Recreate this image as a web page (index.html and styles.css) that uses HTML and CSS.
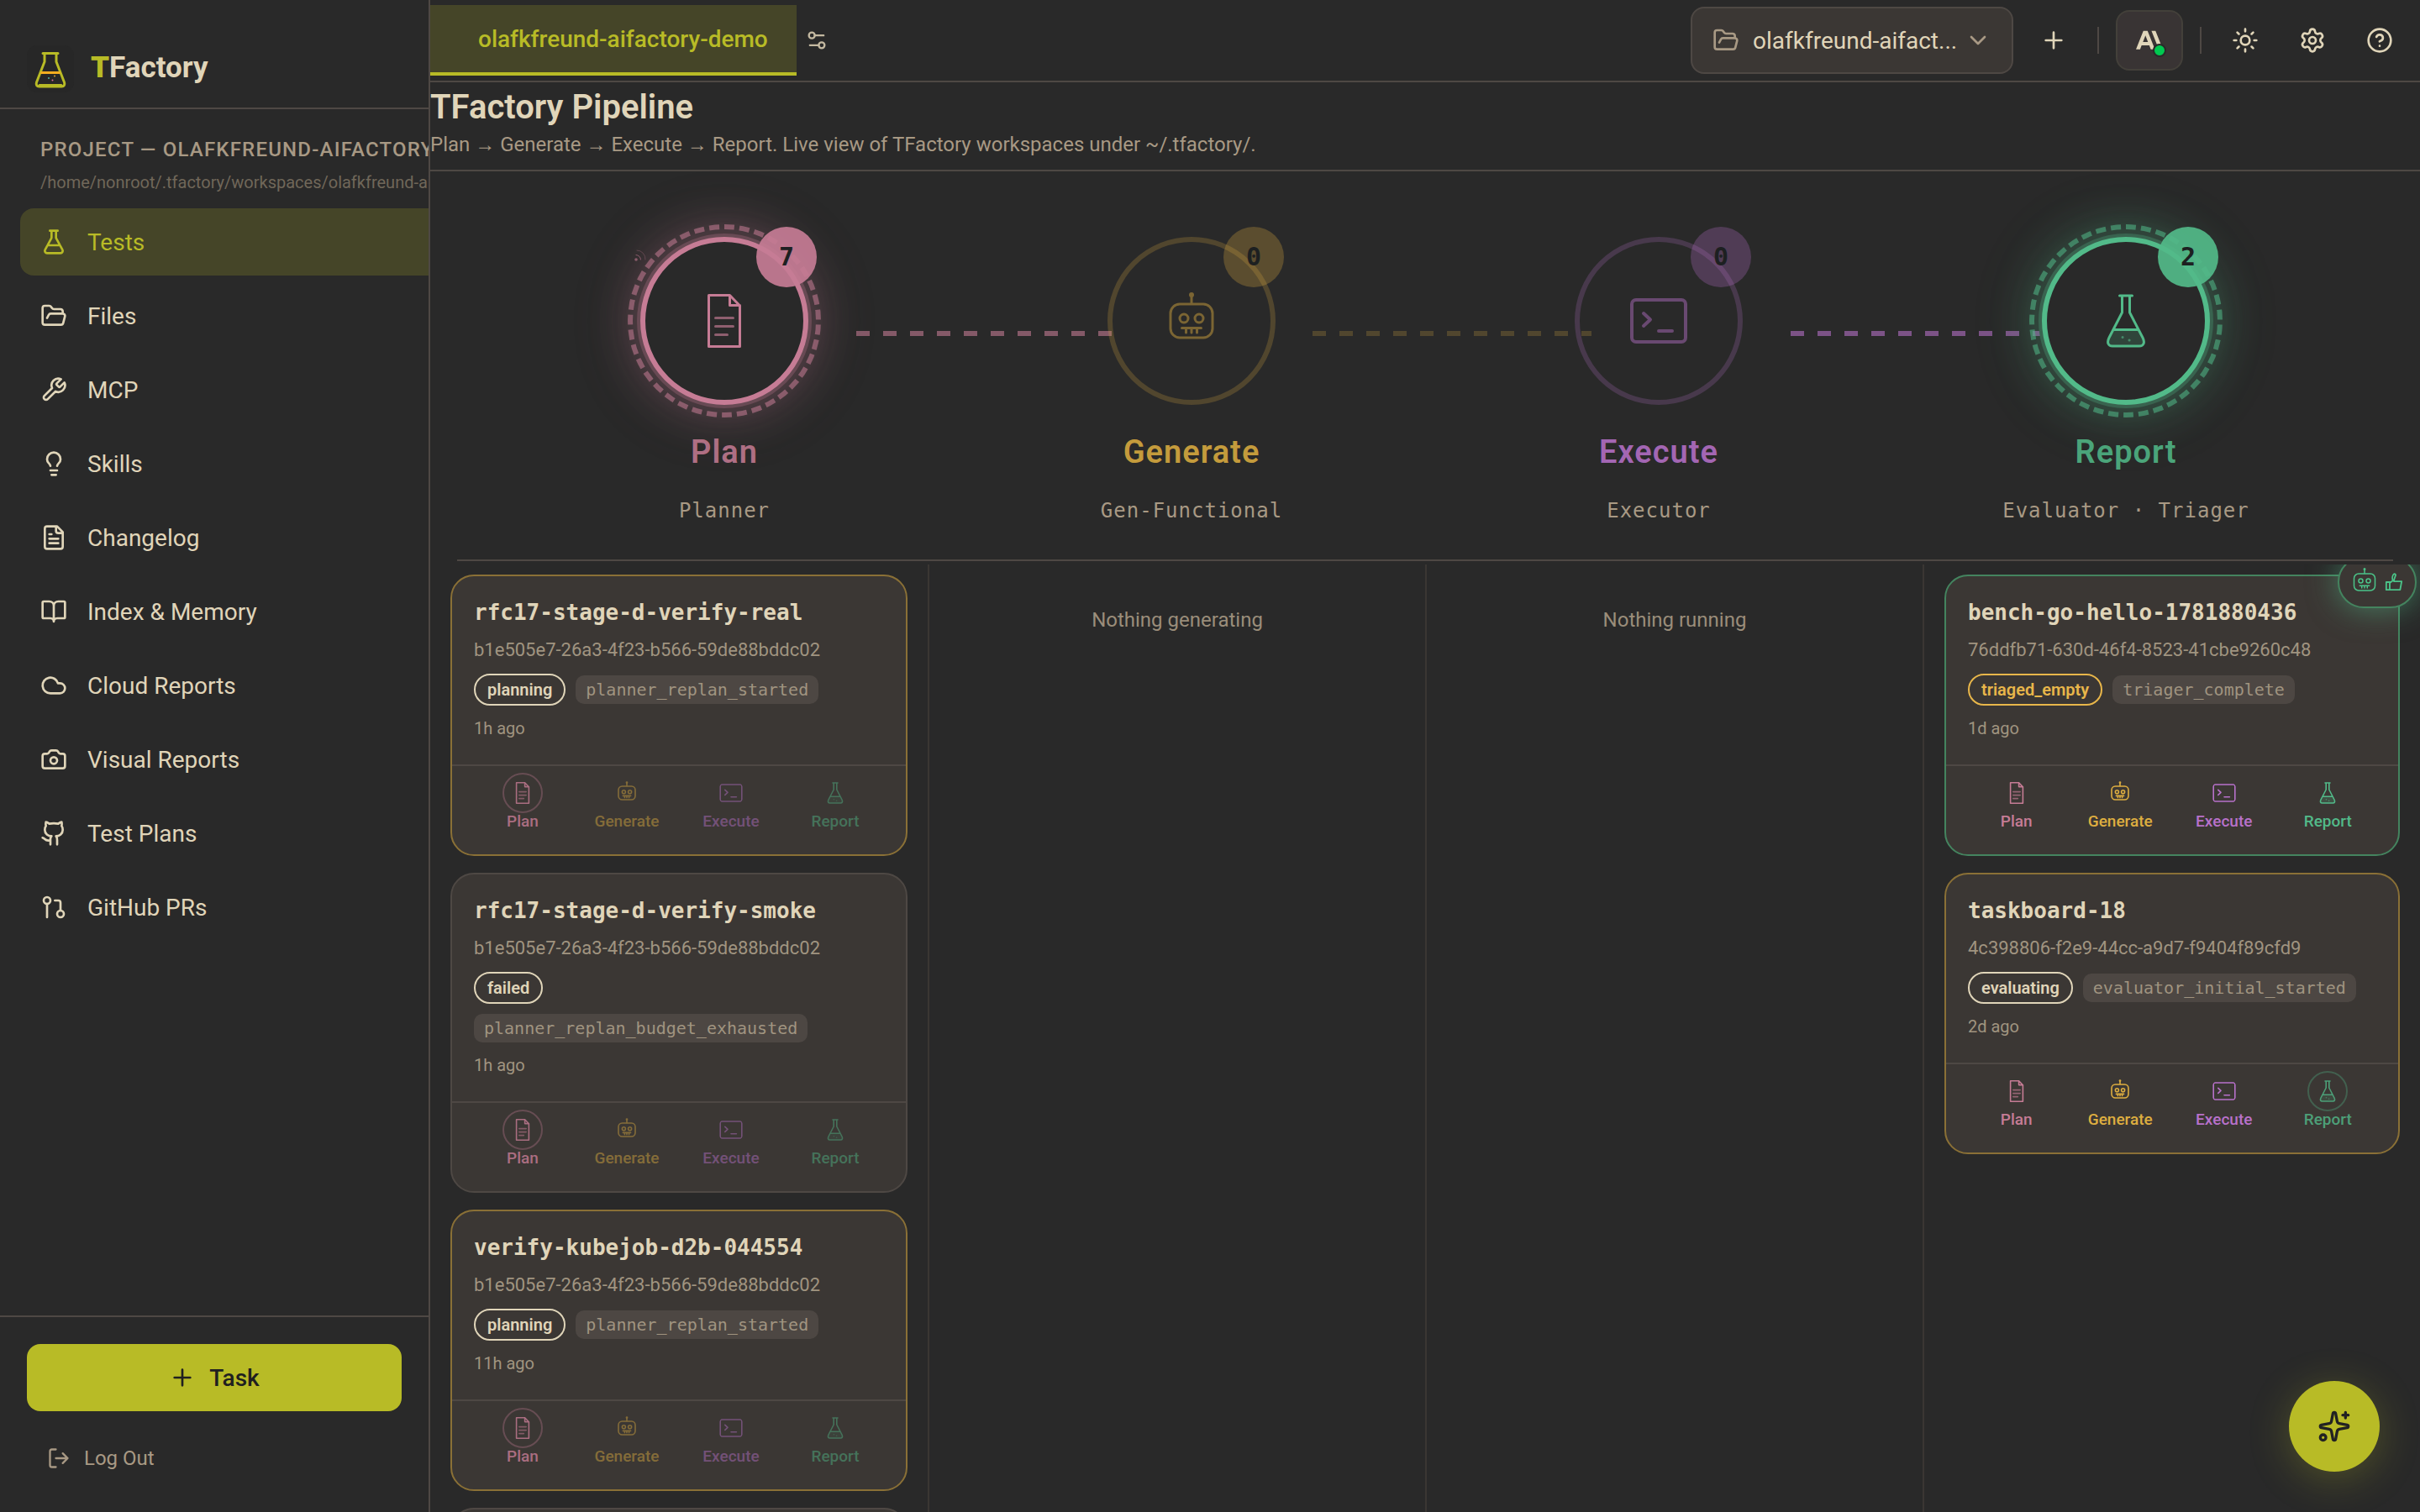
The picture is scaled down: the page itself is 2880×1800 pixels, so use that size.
FILE: index.html
```html
<!DOCTYPE html>
<html lang="en">
<head>
<meta charset="utf-8">
<meta name="viewport" content="width=device-width, initial-scale=1">
<title>TFactory Pipeline</title>
<link rel="stylesheet" href="styles.css">
</head>
<body>
<svg class="sprite" aria-hidden="true">
  <symbol id="flask" viewBox="0 0 24 24"><path d="M14 2v6a2 2 0 0 0 .245.96l5.51 10.08A2 2 0 0 1 18 22H6a2 2 0 0 1-1.755-2.96l5.51-10.08A2 2 0 0 0 10 8V2M6.453 15h11.094M8.5 2h7"/></symbol>
  <symbol id="folder" viewBox="0 0 24 24"><path d="m6 14 1.5-2.9A2 2 0 0 1 9.24 10H20a2 2 0 0 1 1.94 2.5l-1.54 6a2 2 0 0 1-1.95 1.5H4a2 2 0 0 1-2-2V5a2 2 0 0 1 2-2h3.9a2 2 0 0 1 1.69.9l.81 1.2a2 2 0 0 0 1.67.9H18a2 2 0 0 1 2 2v2"/></symbol>
  <symbol id="wrench" viewBox="0 0 24 24"><path d="M14.7 6.3a1 1 0 0 0 0 1.4l1.6 1.6a1 1 0 0 0 1.4 0l3.77-3.77a6 6 0 0 1-7.94 7.94l-6.91 6.91a2.12 2.12 0 0 1-3-3l6.91-6.91a6 6 0 0 1 7.94-7.94l-3.76 3.76z"/></symbol>
  <symbol id="bulb" viewBox="0 0 24 24"><path d="M15 14c.2-1 .7-1.7 1.5-2.5 1-.9 1.5-2.2 1.5-3.5A6 6 0 0 0 6 8c0 1 .2 2.2 1.5 3.5.7.7 1.3 1.5 1.5 2.5M9 18h6M10 22h4"/></symbol>
  <symbol id="file" viewBox="0 0 24 24"><path d="M15 2H6a2 2 0 0 0-2 2v16a2 2 0 0 0 2 2h12a2 2 0 0 0 2-2V7ZM14 2v4a2 2 0 0 0 2 2h4M10 9H8M16 13H8M16 17H8"/></symbol>
  <symbol id="book" viewBox="0 0 24 24"><path d="M12 7v14M3 18a1 1 0 0 1-1-1V4a1 1 0 0 1 1-1h5a4 4 0 0 1 4 4 4 4 0 0 1 4-4h5a1 1 0 0 1 1 1v13a1 1 0 0 1-1 1h-6a3 3 0 0 0-3 3 3 3 0 0 0-3-3z"/></symbol>
  <symbol id="cloud" viewBox="0 0 24 24"><path d="M17.5 19H9a7 7 0 1 1 6.71-9h1.79a4.5 4.5 0 1 1 0 9Z"/></symbol>
  <symbol id="camera" viewBox="0 0 24 24"><path d="M13.997 4a2 2 0 0 1 1.76 1.05l.486.9A2 2 0 0 0 18.003 7H20a2 2 0 0 1 2 2v9a2 2 0 0 1-2 2H4a2 2 0 0 1-2-2V9a2 2 0 0 1 2-2h1.997a2 2 0 0 0 1.759-1.048l.489-.904A2 2 0 0 1 10.004 4z"/><circle cx="12" cy="13" r="3"/></symbol>
  <symbol id="github" viewBox="0 0 24 24"><path d="M15 22v-4a4.8 4.8 0 0 0-1-3.5c3 0 6-2 6-5.5.08-1.25-.27-2.48-1-3.5.28-1.15.28-2.35 0-3.5 0 0-1 0-3 1.5-2.64-.5-5.36-.5-8 0C6 2 5 2 5 2c-.3 1.15-.3 2.35 0 3.5A5.403 5.403 0 0 0 4 9c0 3.5 3 5.5 6 5.5-.39.49-.68 1.05-.85 1.65-.17.6-.22 1.23-.15 1.85v4M9 18c-4.51 2-5-2-7-2"/></symbol>
  <symbol id="pull" viewBox="0 0 24 24"><circle cx="18" cy="18" r="3"/><circle cx="6" cy="6" r="3"/><path d="M13 6h3a2 2 0 0 1 2 2v7M6 9v12"/></symbol>
  <symbol id="plus" viewBox="0 0 24 24"><path d="M5 12h14M12 5v14"/></symbol>
  <symbol id="logout" viewBox="0 0 24 24"><path d="M9 21H5a2 2 0 0 1-2-2V5a2 2 0 0 1 2-2h4M16 17l5-5-5-5M21 12H9"/></symbol>
  <symbol id="tune" viewBox="0 0 24 24"><path d="M14 17H5M19 7h-9"/><circle cx="17" cy="17" r="3"/><circle cx="7" cy="7" r="3"/></symbol>
  <symbol id="chevron" viewBox="0 0 24 24"><path d="m6 9 6 6 6-6"/></symbol>
  <symbol id="sun" viewBox="0 0 24 24"><circle cx="12" cy="12" r="4"/><path d="M12 2v2M12 20v2M4.93 4.93l1.41 1.41M17.66 17.66l1.41 1.41M2 12h2M20 12h2M6.34 17.66l-1.41 1.41M19.07 4.93l-1.41 1.41"/></symbol>
  <symbol id="gear" viewBox="0 0 24 24"><path d="M9.671 4.136a2.34 2.34 0 0 1 4.659 0 2.34 2.34 0 0 0 3.319 1.915 2.34 2.34 0 0 1 2.33 4.033 2.34 2.34 0 0 0 0 3.831 2.34 2.34 0 0 1-2.33 4.033 2.34 2.34 0 0 0-3.319 1.915 2.34 2.34 0 0 1-4.659 0 2.34 2.34 0 0 0-3.32-1.915 2.34 2.34 0 0 1-2.33-4.033 2.34 2.34 0 0 0 0-3.831A2.34 2.34 0 0 1 6.35 6.051a2.34 2.34 0 0 0 3.319-1.915"/><circle cx="12" cy="12" r="3"/></symbol>
  <symbol id="help" viewBox="0 0 24 24"><circle cx="12" cy="12" r="10"/><path d="M9.09 9a3 3 0 0 1 5.83 1c0 2-3 3-3 3M12 17h.01"/></symbol>
  <symbol id="sparkles" viewBox="0 0 24 24"><path d="M11.017 2.814a1 1 0 0 1 1.966 0l1.051 5.558a2 2 0 0 0 1.594 1.594l5.558 1.051a1 1 0 0 1 0 1.966l-5.558 1.051a2 2 0 0 0-1.594 1.594l-1.051 5.558a1 1 0 0 1-1.966 0l-1.051-5.558a2 2 0 0 0-1.594-1.594l-5.558-1.051a1 1 0 0 1 0-1.966l5.558-1.051a2 2 0 0 0 1.594-1.594zM20 2v4M22 4h-4"/><circle cx="4" cy="20" r="2"/></symbol>
  <symbol id="thumb" viewBox="0 0 24 24"><path d="M2 12h4.500v10H2zM6.500 13l4-3c-1-3-.5-7 1.500-8.500 1.500-.5 2.500.5 2 2-.5 2-2 4-2 7.500H22l-2 11H6.500"/></symbol>
  <symbol id="s-plan" viewBox="0 0 80 80"><path d="M21.500 9.500H46.500L58.500 22V70.500H21.500ZM46.500 10V21.500H58.500"/><path opacity=".65" d="M29.500 36.500h21M29.500 46.500h21M29.500 56.500h14"/></symbol>
  <symbol id="s-generate" viewBox="0 0 80 80"><rect x="15" y="20" width="50" height="40" rx="11"/><path d="M40 19V10"/><circle cx="40" cy="9" r="1.500"/><circle cx="31" cy="37" r="5"/><circle cx="49" cy="37" r="5"/><path d="M28.500 48.500h23M33.500 49v5M40 49v5M46.500 49v5"/></symbol>
  <symbol id="s-execute" viewBox="0 0 80 80"><rect x="8" y="15" width="64" height="50" rx="5"/><path d="m22 31 8 7.500-8 7.500M40 52h16"/></symbol>
  <symbol id="s-report" viewBox="0 0 80 80"><path class="liquid" d="M26 50H54L60 62c2 5 0 8-4 8H24c-4 0-6-3-4-8z"/><path d="M32.500 10h15M35.500 10v20L20 60c-3 6-1 10 4 10h32c5 0 7-4 4-10L44.500 30V10M26 50.500h28"/><path opacity=".6" d="M36 59.500h.1M44 63h.1"/></symbol>
</svg>

<aside class="sidebar">
  <header class="brand">
    <svg class="brand-mark" viewBox="0 0 56 56" aria-hidden="true"><path d="M19 9.500h18M21 10v9.500L11.500 44c-1 3 .5 5 3 5h27c2.500 0 4-2 3-5L35 19.500V10"/><path d="M15 47.500h26" /><path class="brand-level" d="M17.500 32.500h21"/><circle class="dot-a" cx="26" cy="39" r="1"/><circle class="dot-b" cx="30.500" cy="41.500" r="1"/><circle class="dot-c" cx="33" cy="36.500" r="1"/></svg>
    <span class="brand-name"><b>T</b>Factory</span>
  </header>
  <div class="project">
    <h2 class="project-title">PROJECT — OLAFKFREUND-AIFACTORY-DEMO</h2>
    <p class="project-path">/home/nonroot/.tfactory/workspaces/olafkfreund-aifactory-demo</p>
  </div>
  <nav class="nav">
    <a class="nav-item active" href="#"><svg class="icon"><use href="#flask"/></svg>Tests</a>
    <a class="nav-item" href="#"><svg class="icon"><use href="#folder"/></svg>Files</a>
    <a class="nav-item" href="#"><svg class="icon"><use href="#wrench"/></svg>MCP</a>
    <a class="nav-item" href="#"><svg class="icon"><use href="#bulb"/></svg>Skills</a>
    <a class="nav-item" href="#"><svg class="icon"><use href="#file"/></svg>Changelog</a>
    <a class="nav-item" href="#"><svg class="icon"><use href="#book"/></svg>Index &amp; Memory</a>
    <a class="nav-item" href="#"><svg class="icon"><use href="#cloud"/></svg>Cloud Reports</a>
    <a class="nav-item" href="#"><svg class="icon"><use href="#camera"/></svg>Visual Reports</a>
    <a class="nav-item" href="#"><svg class="icon"><use href="#github"/></svg>Test Plans</a>
    <a class="nav-item" href="#"><svg class="icon"><use href="#pull"/></svg>GitHub PRs</a>
  </nav>
  <footer class="side-foot">
    <button class="task-btn" type="button"><svg class="icon"><use href="#plus"/></svg>Task</button>
    <button class="logout-btn" type="button"><svg class="icon small"><use href="#logout"/></svg>Log Out</button>
  </footer>
</aside>

<div class="main">
  <header class="topbar">
    <button class="tab" type="button">olafkfreund-aifactory-demo</button>
    <button class="tab-tune" type="button" aria-label="Tab settings"><svg class="icon small"><use href="#tune"/></svg></button>
    <div class="tools">
      <label class="picker">
        <svg class="icon"><use href="#folder"/></svg>
        <select aria-label="Project"><option>olafkfreund-aifact...</option></select>
        <svg class="icon"><use href="#chevron"/></svg>
      </label>
      <button class="tool add" type="button" aria-label="Add project"><svg class="icon"><use href="#plus"/></svg></button>
      <span class="sep"></span>
      <button class="agent" type="button" aria-label="Agent status"><svg viewBox="0 0 24 24"><path d="M13.827 3.520h3.603L24 20h-3.603l-6.570-16.480zm-7.258 0h3.767L16.906 20h-3.674l-1.343-3.461H5.017l-1.344 3.460H0L6.570 3.522zm4.132 9.959L8.453 7.687 6.205 13.480H10.700z"/></svg><i class="online"></i></button>
      <span class="sep"></span>
      <div class="tool-set">
        <button class="tool" type="button" aria-label="Theme"><svg class="icon"><use href="#sun"/></svg></button>
        <button class="tool" type="button" aria-label="Settings"><svg class="icon"><use href="#gear"/></svg></button>
        <button class="tool" type="button" aria-label="Help"><svg class="icon"><use href="#help"/></svg></button>
      </div>
    </div>
  </header>

  <div class="page-head">
    <h1>TFactory Pipeline</h1>
    <p>Plan → Generate → Execute → Report. Live view of TFactory workspaces under ~/.tfactory/.</p>
  </div>

  <section class="stages">
    <div class="stage plan lit">
      <div class="ring"><svg class="signal" viewBox="0 0 16 16"><circle cx="3" cy="13" r="1.800"/><path d="M3 7.500a5.500 5.500 0 0 1 5.500 5.500"/><path opacity=".5" d="M4 2a10 10 0 0 1 10 11"/></svg><svg class="glyph"><use href="#s-plan"/></svg><span class="count">7</span></div>
      <h2>Plan</h2><p>Planner</p>
    </div>
    <div class="stage generate">
      <div class="ring"><svg class="glyph"><use href="#s-generate"/></svg><span class="count">0</span></div>
      <h2>Generate</h2><p>Gen-Functional</p>
    </div>
    <div class="stage execute">
      <div class="ring"><svg class="glyph"><use href="#s-execute"/></svg><span class="count">0</span></div>
      <h2>Execute</h2><p>Executor</p>
    </div>
    <div class="stage report lit">
      <div class="ring"><svg class="glyph"><use href="#s-report"/></svg><span class="count">2</span></div>
      <h2>Report</h2><p>Evaluator · Triager</p>
    </div>
  </section>

  <section class="board">
    <div class="column">
      <article class="card busy">
        <div class="card-body">
          <h3>rfc17-stage-d-verify-real</h3>
          <p class="card-id">b1e505e7-26a3-4f23-b566-59de88bddc02</p>
          <div class="tags"><span class="pill">planning</span><code class="chip">planner_replan_started</code></div>
          <time>1h ago</time>
        </div>
        <ul class="steps">
          <li class="plan current"><svg class="step-icon"><use href="#s-plan"/></svg>Plan</li>
          <li class="generate todo"><svg class="step-icon"><use href="#s-generate"/></svg>Generate</li>
          <li class="execute todo"><svg class="step-icon"><use href="#s-execute"/></svg>Execute</li>
          <li class="report todo"><svg class="step-icon"><use href="#s-report"/></svg>Report</li>
        </ul>
      </article>
      <article class="card">
        <div class="card-body">
          <h3>rfc17-stage-d-verify-smoke</h3>
          <p class="card-id">b1e505e7-26a3-4f23-b566-59de88bddc02</p>
          <div class="tags"><span class="pill">failed</span><code class="chip">planner_replan_budget_exhausted</code></div>
          <time>1h ago</time>
        </div>
        <ul class="steps">
          <li class="plan current"><svg class="step-icon"><use href="#s-plan"/></svg>Plan</li>
          <li class="generate todo"><svg class="step-icon"><use href="#s-generate"/></svg>Generate</li>
          <li class="execute todo"><svg class="step-icon"><use href="#s-execute"/></svg>Execute</li>
          <li class="report todo"><svg class="step-icon"><use href="#s-report"/></svg>Report</li>
        </ul>
      </article>
      <article class="card busy">
        <div class="card-body">
          <h3>verify-kubejob-d2b-044554</h3>
          <p class="card-id">b1e505e7-26a3-4f23-b566-59de88bddc02</p>
          <div class="tags"><span class="pill">planning</span><code class="chip">planner_replan_started</code></div>
          <time>11h ago</time>
        </div>
        <ul class="steps">
          <li class="plan current"><svg class="step-icon"><use href="#s-plan"/></svg>Plan</li>
          <li class="generate todo"><svg class="step-icon"><use href="#s-generate"/></svg>Generate</li>
          <li class="execute todo"><svg class="step-icon"><use href="#s-execute"/></svg>Execute</li>
          <li class="report todo"><svg class="step-icon"><use href="#s-report"/></svg>Report</li>
        </ul>
      </article>
      <article class="card"><div class="card-body"></div></article>
    </div>
    <div class="column"><p class="empty">Nothing generating</p></div>
    <div class="column"><p class="empty">Nothing running</p></div>
    <div class="column">
      <article class="card done">
        <div class="approved"><svg class="bot"><use href="#s-generate"/></svg><svg class="thumb"><use href="#thumb"/></svg></div>
        <div class="card-body">
          <h3>bench-go-hello-1781880436</h3>
          <p class="card-id">76ddfb71-630d-46f4-8523-41cbe9260c48</p>
          <div class="tags"><span class="pill warn">triaged_empty</span><code class="chip">triager_complete</code></div>
          <time>1d ago</time>
        </div>
        <ul class="steps">
          <li class="plan"><svg class="step-icon"><use href="#s-plan"/></svg>Plan</li>
          <li class="generate"><svg class="step-icon"><use href="#s-generate"/></svg>Generate</li>
          <li class="execute"><svg class="step-icon"><use href="#s-execute"/></svg>Execute</li>
          <li class="report"><svg class="step-icon"><use href="#s-report"/></svg>Report</li>
        </ul>
      </article>
      <article class="card busy">
        <div class="card-body">
          <h3>taskboard-18</h3>
          <p class="card-id">4c398806-f2e9-44cc-a9d7-f9404f89cfd9</p>
          <div class="tags"><span class="pill">evaluating</span><code class="chip">evaluator_initial_started</code></div>
          <time>2d ago</time>
        </div>
        <ul class="steps">
          <li class="plan"><svg class="step-icon"><use href="#s-plan"/></svg>Plan</li>
          <li class="generate"><svg class="step-icon"><use href="#s-generate"/></svg>Generate</li>
          <li class="execute"><svg class="step-icon"><use href="#s-execute"/></svg>Execute</li>
          <li class="report current"><svg class="step-icon"><use href="#s-report"/></svg>Report</li>
        </ul>
      </article>
    </div>
  </section>
</div>

<button class="fab" type="button" aria-label="Assistant"><svg class="icon"><use href="#sparkles"/></svg></button>
</body>
</html>
```
FILE: styles.css
```css
:root {
  --bg: #292929;
  --card: #3b3734;
  --line: #4e4844;
  --fg: #e0d5b9;
  --muted: #a89984;
  --primary: #b8bb26;
  --primary-soft: #454528;
  --pink: #c67c95;
  --yellow: #deae40;
  --purple: #b871ca;
  --green: #52ba89;
  --mono: "DejaVu Sans Mono", "Liberation Mono", monospace;
}

* { box-sizing: border-box; margin: 0; padding: 0; }

body {
  display: flex;
  height: 100vh;
  overflow: hidden;
  background: var(--bg);
  color: var(--fg);
  font-family: Roboto, "Liberation Sans", sans-serif;
  font-size: 28px;
}

button, select { font: inherit; color: inherit; background: none; border: 0; cursor: pointer; }
a { color: inherit; text-decoration: none; }
ul { list-style: none; }

.sprite { position: absolute; width: 0; height: 0; }

.icon, .glyph, .step-icon, .bot, .thumb, .signal {
  display: block;
  flex: none;
  fill: none;
  stroke: currentColor;
  stroke-linecap: round;
  stroke-linejoin: round;
}
.icon { width: 32px; height: 32px; stroke-width: 2; }
.icon.small { width: 28px; height: 28px; }

/* Sidebar */
.sidebar {
  display: flex;
  flex-direction: column;
  flex: none;
  width: 512px;
  border-right: 2px solid var(--line);
  overflow: hidden;
}
.brand {
  display: flex;
  gap: 20px;
  padding: 54px 32px 18px;
  border-bottom: 2px solid var(--line);
}
.brand-mark {
  width: 56px;
  height: 56px;
  border-radius: 12px;
  background: #272727;
  fill: none;
  stroke: var(--primary);
  stroke-width: 3;
  stroke-linecap: round;
  stroke-linejoin: round;
}
.brand-mark .brand-level { stroke: #f5ad1f; }
.brand-mark circle { stroke: none; }
.dot-a { fill: #56b6a0; }
.dot-b { fill: #e06c9a; }
.dot-c { fill: #d3a03a; }
.brand-name { font-size: 35px; font-weight: 700; line-height: 54px; }
.brand-name b { color: var(--primary); }

.project {
  display: grid;
  gap: 8px;
  padding: 32px 0 16px 48px;
  overflow: hidden;
  white-space: nowrap;
}
.project-title {
  color: var(--muted);
  font-size: 24px;
  font-weight: 500;
  line-height: 32px;
  letter-spacing: .05em;
}
.project-path { color: #706759; font-size: 20px; line-height: 30px; }

.nav { display: grid; gap: 8px; padding-left: 24px; }
.nav-item {
  display: flex;
  align-items: center;
  gap: 24px;
  height: 80px;
  padding-left: 24px;
  border-radius: 16px 0 0 16px;
}
.nav-item.active { background: var(--primary-soft); color: var(--primary); }

.side-foot {
  display: grid;
  gap: 24px;
  margin-top: auto;
  padding: 32px;
  border-top: 2px solid var(--line);
}
.task-btn {
  display: flex;
  align-items: center;
  justify-content: center;
  gap: 16px;
  height: 80px;
  border-radius: 16px;
  background: var(--primary);
  color: #1f2020;
  font-weight: 500;
}
.logout-btn {
  display: flex;
  align-items: center;
  gap: 16px;
  height: 64px;
  padding-left: 24px;
  color: var(--muted);
  font-size: 24px;
}

/* Top bar */
.main { display: flex; flex-direction: column; flex: 1; min-width: 0; }
.topbar {
  display: flex;
  align-items: center;
  height: 98px;
  flex: none;
  border-bottom: 2px solid var(--line);
}
.tab {
  height: 84px;
  padding: 0 34px 0 57px;
  border-bottom: 4px solid var(--primary);
  background: var(--primary-soft);
  color: var(--primary);
  font-weight: 500;
}
.tab-tune { padding: 10px; color: #c4b9a1; }
.tools { display: flex; align-items: center; gap: 20px; margin-left: auto; padding-right: 16px; }
.picker {
  display: flex;
  align-items: center;
  gap: 8px;
  width: 384px;
  height: 80px;
  padding: 0 24px;
  border: 2px solid var(--line);
  border-radius: 16px;
  background: var(--card);
}
.picker .icon { color: var(--muted); }
.picker select { appearance: none; flex: 1; min-width: 0; padding-left: 8px; }
.tool { display: flex; align-items: center; justify-content: center; width: 64px; height: 64px; }
.tool.add { margin-left: -4px; }
.tool-set { display: flex; gap: 16px; }
.sep { width: 2px; height: 32px; background: var(--line); }
.agent {
  position: relative;
  display: flex;
  align-items: center;
  justify-content: center;
  width: 80px;
  height: 72px;
  border: 2px solid #43403a;
  border-radius: 16px;
  background: #393434;
}
.agent svg { width: 32px; height: 32px; fill: var(--fg); }
.online {
  position: absolute;
  right: 18px;
  bottom: 14px;
  width: 16px;
  height: 16px;
  border: 2px solid var(--bg);
  border-radius: 50%;
  background: #00c950;
}

/* Page heading */
.page-head { padding: 2px 0 14px; border-bottom: 2px solid var(--line); }
.page-head h1 { font-size: 40px; font-weight: 600; line-height: 56px; }
.page-head p { color: var(--muted); font-size: 24px; line-height: 32px; }

/* Stage overview */
.plan { --tone: var(--pink); }
.generate { --tone: var(--yellow); }
.execute { --tone: var(--purple); }
.report { --tone: var(--green); }

.stages {
  display: grid;
  grid-template-columns: repeat(4, 1fr);
  margin: 0 32px 4px;
  padding: 78px 40px 42px;
  border-bottom: 2px solid var(--line);
}
.stage { position: relative; display: flex; flex-direction: column; align-items: center; }
.stage h2 {
  margin: 32px 0 30px;
  color: var(--tone);
  font-size: 38px;
  font-weight: 600;
  line-height: 48px;
  letter-spacing: 1px;
  opacity: .86;
}
.stage p { color: var(--muted); font: 24px/32px var(--mono); letter-spacing: 1px; }
.stage:not(:last-child)::after {
  content: "";
  position: absolute;
  top: 112px;
  left: calc(50% + 157px);
  width: 304px;
  height: 6px;
  background: repeating-linear-gradient(90deg, var(--tone) 0 16px, transparent 16px 32px);
  opacity: .58;
}
.stage.generate::after { left: calc(50% + 144px); width: 332px; opacity: .22; }

.ring {
  position: relative;
  z-index: 1;
  display: flex;
  align-items: center;
  justify-content: center;
  width: 200px;
  height: 200px;
  border: 6px solid color-mix(in srgb, var(--tone) 22%, transparent);
  border-radius: 50%;
  color: var(--tone);
}
.glyph { width: 80px; height: 80px; stroke-width: 3; opacity: .45; }
.execute .glyph { stroke-width: 4; }
.count {
  position: absolute;
  top: -18px;
  right: -16px;
  width: 72px;
  border-radius: 50%;
  background: color-mix(in srgb, var(--tone) 28%, transparent);
  color: #1d2021;
  font: 700 30px/72px var(--mono);
  text-align: center;
}
.lit .ring {
  border-color: var(--tone);
  background: var(--bg);
  box-shadow:
    0 0 0 4px color-mix(in srgb, var(--tone) 40%, var(--bg)),
    0 0 60px color-mix(in srgb, var(--tone) 42%, transparent),
    0 0 96px color-mix(in srgb, var(--tone) 14%, transparent);
}
.lit .ring::before {
  content: "";
  position: absolute;
  inset: -21px;
  border: 6px dashed var(--tone);
  border-radius: 50%;
  opacity: .55;
}
.lit .glyph { opacity: 1; }
.lit .count { background: color-mix(in srgb, var(--tone) 92%, transparent); }
.signal { position: absolute; top: 8px; left: -14px; width: 16px; height: 16px; opacity: .6; }
.signal circle { fill: currentColor; stroke: none; }
.liquid { fill: currentColor; fill-opacity: .2; stroke: none; }

/* Board */
.board { display: grid; grid-template-columns: repeat(4, 1fr); flex: 1; min-height: 0; overflow: hidden; }
.column { display: flex; flex-direction: column; gap: 20px; min-width: 0; padding: 12px 24px; }
.column + .column { border-left: 2px solid #3a3633; }
.empty { padding-top: 38px; color: #9a8d7a; font-size: 24px; line-height: 32px; text-align: center; }

.card {
  position: relative;
  flex: none;
  border: 2px solid var(--line);
  border-radius: 28px;
  background: var(--card);
}
.card.busy { border-color: #8a7036; }
.card.done { border-color: #44845f; }
.card-body {
  display: flex;
  flex-direction: column;
  gap: 14px;
  padding: 26px 26px 30px;
}
.card h3 { font: 700 26px/34px var(--mono); }
.card-id { color: #a09480; font-size: 22px; line-height: 28px; }
.tags { display: flex; flex-wrap: wrap; align-items: center; gap: 12px; }
.pill {
  padding: 0 14px;
  border: 2px solid currentColor;
  border-radius: 19px;
  font-size: 20px;
  font-weight: 600;
  line-height: 34px;
}
.pill.warn { color: #e8b64a; }
.chip {
  padding: 0 12px;
  border-radius: 10px;
  background: #4d4743;
  color: #a09480;
  font: 20px/34px var(--mono);
}
.card time { color: #a09480; font-size: 20px; line-height: 26px; }

.steps {
  display: grid;
  grid-template-columns: repeat(4, 1fr);
  padding: 8px 22px 29px;
  border-top: 2px solid var(--line);
}
.steps li {
  display: flex;
  flex-direction: column;
  align-items: center;
  color: var(--tone);
  font-size: 19px;
  font-weight: 500;
  line-height: 20px;
}
.step-icon {
  width: 48px;
  height: 48px;
  padding: 6px;
  border: 2px solid transparent;
  border-radius: 50%;
  stroke-width: 4;
}
.steps .todo { opacity: .45; }
.steps .current { opacity: .8; }
.current .step-icon { border-color: color-mix(in srgb, var(--tone) 40%, transparent); }

.approved {
  position: absolute;
  top: -24px;
  right: -22px;
  display: flex;
  align-items: center;
  gap: 4px;
  height: 62px;
  padding: 0 14px 0 10px;
  border: 2px solid #44845f;
  border-radius: 31px;
  background: var(--card);
  box-shadow: 0 0 36px color-mix(in srgb, var(--green) 55%, transparent);
  color: #4bc489;
}
.bot { width: 40px; height: 40px; stroke-width: 3; }
.thumb { width: 22px; height: 22px; stroke-width: 2; }

.fab {
  position: fixed;
  right: 48px;
  bottom: 48px;
  display: flex;
  align-items: center;
  justify-content: center;
  width: 108px;
  height: 108px;
  border-radius: 50%;
  background: var(--primary);
  box-shadow: 0 8px 48px color-mix(in srgb, var(--primary) 28%, transparent);
  color: #222;
}
.fab .icon { width: 40px; height: 40px; }
```
